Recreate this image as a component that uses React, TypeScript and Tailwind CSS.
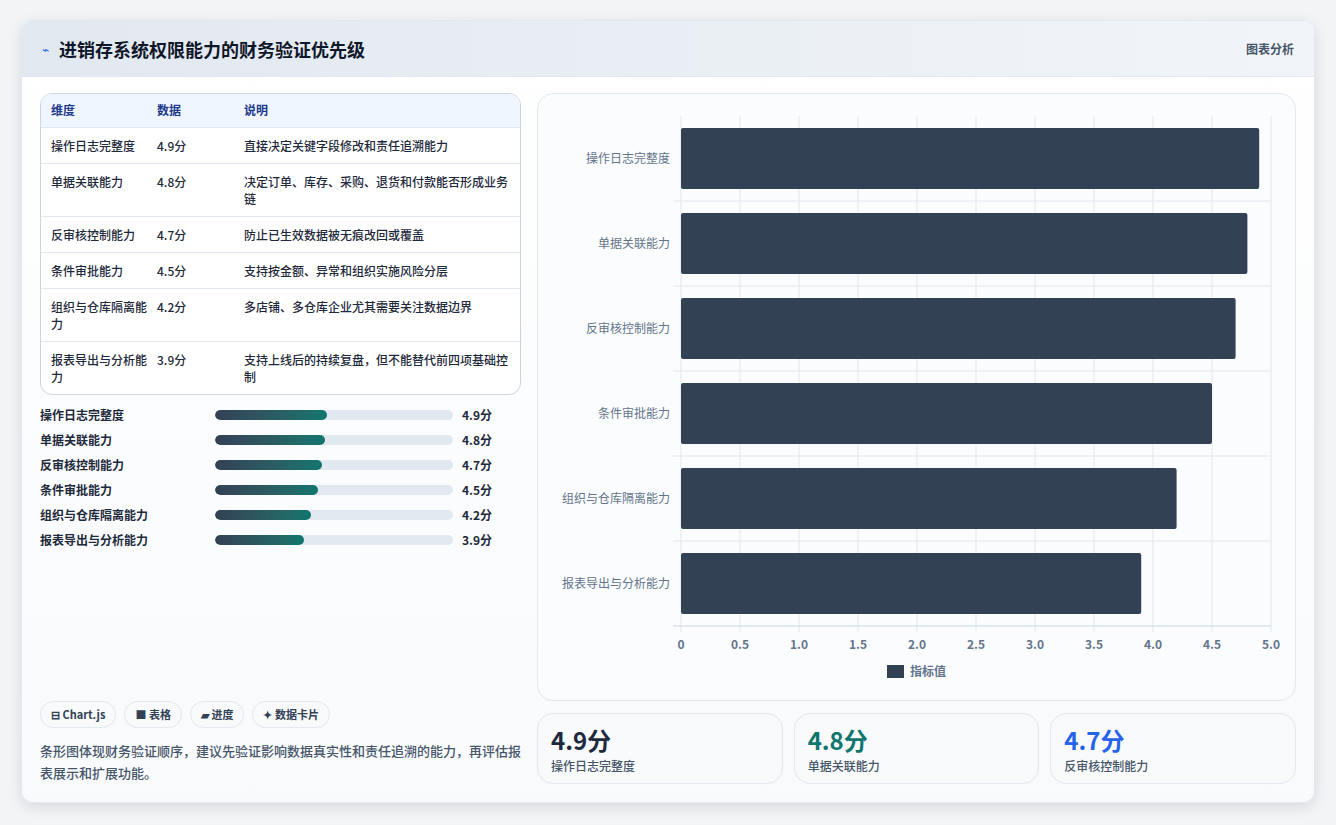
const font = { fontFamily: '"Noto Sans CJK SC", "Noto Sans", sans-serif' };

const rows = [
  { name: "操作日志完整度", v: 4.9, desc: "直接决定关键字段修改和责任追溯能力" },
  { name: "单据关联能力", v: 4.8, desc: "决定订单、库存、采购、退货和付款能否形成业务链" },
  { name: "反审核控制能力", v: 4.7, desc: "防止已生效数据被无痕改回或覆盖" },
  { name: "条件审批能力", v: 4.5, desc: "支持按金额、异常和组织实施风险分层" },
  { name: "组织与仓库隔离能力", v: 4.2, desc: "多店铺、多仓库企业尤其需要关注数据边界" },
  { name: "报表导出与分析能力", v: 3.9, desc: "支持上线后的持续复盘，但不能替代前四项基础控制" },
];

function Chart() {
  const x0 = 143, w = 590, top = 22, band = 85;
  const ticks = [0, 0.5, 1, 1.5, 2, 2.5, 3, 3.5, 4, 4.5, 5];
  return (
    <svg width="757" height="607" className="block">
      {ticks.map((t) => (
        <g key={t}>
          <line x1={x0 + (t / 5) * w} x2={x0 + (t / 5) * w} y1={top} y2={top + band * 6 + 6} stroke="#e2e8f0" />
          <text x={x0 + (t / 5) * w} y={555} textAnchor="middle" fontSize="12" fill="#64748b" fontWeight="600">
            {t === 0 ? "0" : t.toFixed(1)}
          </text>
        </g>
      ))}
      {[1, 2, 3, 4, 5].map((i) => (
        <line key={i} x1={x0 - 8} x2={x0 + w} y1={top + band * i} y2={top + band * i} stroke="#e2e8f0" />
      ))}
      <line x1={x0 - 8} x2={x0 + w} y1={top + band * 6} y2={top + band * 6} stroke="#cbd5e1" />
      {rows.map((r, i) => (
        <g key={r.name}>
          <rect x={x0} y={top + band * i + 12} width={(r.v / 5) * w} height={61} rx="2" fill="#334155" />
          <text x={x0 - 11} y={top + band * i + 47} textAnchor="end" fontSize="12" fill="#64748b">
            {r.name}
          </text>
        </g>
      ))}
      <rect x={349} y={571} width={17} height={13} fill="#334155" />
      <text x={372} y={582} fontSize="12" fill="#64748b" fontWeight="600">指标值</text>
    </svg>
  );
}

export default function App() {
  return (
    <div className="min-h-screen bg-[#f3f4f6] pt-5 pl-[21px]" style={font}>
      <div className="w-[1294px] h-[783px] rounded-xl bg-gradient-to-b from-white to-[#f8fafc] shadow-[0_4px_14px_rgba(15,23,42,0.12)] border border-[#e2e8f0] overflow-hidden flex flex-col">
        <div className="h-[56px] shrink-0 bg-gradient-to-r from-[#e2e8f0] to-[#f1f5f9] flex items-center justify-between px-5 border-b border-[#e2e8f0]">
          <div className="flex items-center gap-2.5">
            <span className="text-[#2563eb] text-xs">⌁</span>
            <h1 className="text-lg font-bold text-[#0f172a]">进销存系统权限能力的财务验证优先级</h1>
          </div>
          <span className="text-xs font-semibold text-[#475569]">图表分析</span>
        </div>
        <div className="flex gap-4 px-[18px] pt-4 pb-[18px] flex-1">
          <div className="w-[484px] flex flex-col">
            <div className="rounded-xl border border-[#cbd5e1] overflow-hidden bg-white">
              <table className="w-full text-xs text-[#1e293b]">
                <thead className="bg-[#eff6ff] text-[#1e3a8a]">
                  <tr className="h-[33px]">
                    <th className="text-left font-semibold pl-2.5 w-[116px]">维度</th>
                    <th className="text-left font-semibold w-[87px]">数据</th>
                    <th className="text-left font-semibold">说明</th>
                  </tr>
                </thead>
                <tbody>
                  {rows.map((r) => (
                    <tr key={r.name} className="border-t border-[#e2e8f0] align-top">
                      <td className="pl-2.5 pr-2 py-[9px] leading-[17px] font-medium">{r.name}</td>
                      <td className="py-[9px] leading-[17px] font-medium">{r.v}分</td>
                      <td className="py-[9px] pr-3 leading-[17px] font-medium">{r.desc}</td>
                    </tr>
                  ))}
                </tbody>
              </table>
            </div>
            <div className="flex flex-col gap-[9px] mt-[12px]">
              {rows.map((r) => (
                <div key={r.name} className="flex items-center h-4 text-xs">
                  <span className="w-[175px] font-semibold text-[#1e293b]">{r.name}</span>
                  <div className="w-[238px] h-2.5 rounded-full bg-[#e2e8f0] overflow-hidden">
                    <div className="h-full rounded-full bg-gradient-to-r from-[#334155] to-[#0f766e]" style={{ width: `${r.v * 9.6}%` }} />
                  </div>
                  <span className="ml-[9px] font-bold text-[#1e293b]">{r.v}分</span>
                </div>
              ))}
            </div>
            <div className="mt-auto">
              <div className="flex gap-2">
                {["⊟ Chart.js", "■ 表格", "▰ 进度", "✦ 数据卡片"].map((c) => (
                  <span key={c} className="h-[27px] px-2.5 rounded-full border border-[#e2e8f0] bg-[#f8fafc] text-[11px] font-semibold text-[#334155] flex items-center">{c}</span>
                ))}
              </div>
              <p className="mt-3 text-[13px] leading-[22px] text-[#475569] font-medium">
                条形图体现财务验证顺序，建议先验证影响数据真实性和责任追溯的能力，再评估报表展示和扩展功能。
              </p>
            </div>
          </div>
          <div className="flex-1 flex flex-col gap-3">
            <div className="h-[608px] rounded-2xl border border-[#e2e8f0] bg-[#fafcfd] overflow-hidden">
              <Chart />
            </div>
            <div className="grid grid-cols-3 gap-[11px] flex-1">
              {[
                { v: "4.9分", n: "操作日志完整度", c: "text-[#1e293b]" },
                { v: "4.8分", n: "单据关联能力", c: "text-[#0f766e]" },
                { v: "4.7分", n: "反审核控制能力", c: "text-[#2563eb]" },
              ].map((s) => (
                <div key={s.n} className="rounded-2xl border border-[#e2e8f0] bg-[#f8fafc] px-[13px] pt-[10px]">
                  <div className={`text-2xl font-bold leading-[32px] ${s.c}`}>{s.v}</div>
                  <div className="text-xs font-medium text-[#475569] mt-0.5">{s.n}</div>
                </div>
              ))}
            </div>
          </div>
        </div>
      </div>
    </div>
  );
}
